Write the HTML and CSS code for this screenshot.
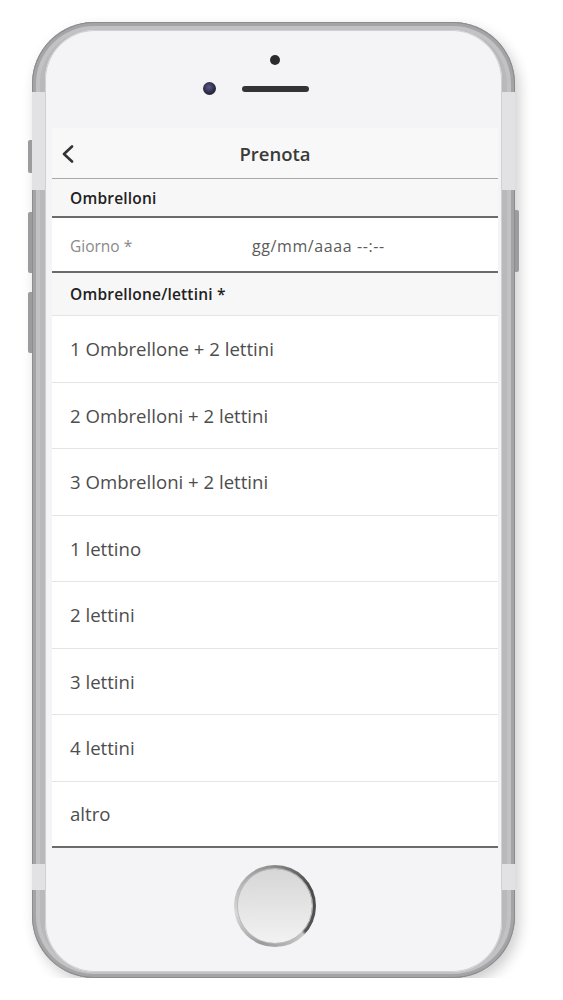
FILE: index.html
```html
<!DOCTYPE html>
<html>
<head>
    <meta charset="UTF-8">
    <title>Prenota</title>
    <link rel="stylesheet" href="styles.css">
</head>
<body>

    <div class="page">
        <div class="phone">
            <span class="side-btn left b1"></span>
            <span class="side-btn left b2"></span>
            <span class="side-btn left b3"></span>
            <span class="side-btn right b4"></span>
            <span class="band left top"></span>
            <span class="band right top"></span>
            <span class="band left bottom"></span>
            <span class="band right bottom"></span>

            <div class="bezel">
                <div class="top">
                    <div class="sensor"></div>
                    <div class="camera-row">
                        <div class="camera"></div>
                        <div class="speaker"></div>
                        <div class="spacer"></div>
                    </div>
                </div>

                <div class="screen">
                    <div class="nav">
                        <div class="back">
                            <svg width="14" height="18" viewBox="0 0 14 18">
                                <polyline points="11,1.5 3,9 11,16.5" fill="none" stroke="#333" stroke-width="2.6" stroke-linecap="round" stroke-linejoin="round"/>
                            </svg>
                        </div>
                        <div class="title">Prenota</div>
                        <div></div>
                    </div>

                    <div class="section first">Ombrelloni</div>
                    <div class="field">
                        <span class="label">Giorno *</span>
                        <span class="value">gg/mm/aaaa --:--</span>
                    </div>

                    <div class="section second">Ombrellone/lettini *</div>
                    <ul class="options">
                        <li>1 Ombrellone + 2 lettini</li>
                        <li>2 Ombrelloni + 2 lettini</li>
                        <li>3 Ombrelloni + 2 lettini</li>
                        <li>1 lettino</li>
                        <li>2 lettini</li>
                        <li>3 lettini</li>
                        <li>4 lettini</li>
                        <li>altro</li>
                    </ul>
                </div>

                <div class="bottom">
                    <div class="home"><div class="home-face"></div></div>
                </div>
            </div>
        </div>
    </div>

</body>
</html>
```

FILE: styles.css
```css
body {
    margin: 0;
    background: #fff;
    font-family: "Open Sans", Arial, sans-serif;
}

.page {
    padding: 22px 0 0 32px;
}

.phone {
    position: relative;
    box-sizing: border-box;
    width: 483px;
    height: 956px;
    padding: 8px 13px 6px 13px;
    border-radius: 62px;
    background: #b9b9bb;
    box-shadow: inset 0 0 0 1px #8c8c8e, inset 0 0 0 4px #a4a4a6, inset 0 0 0 8px #c2c2c4,
        4px 6px 14px rgba(0, 0, 0, 0.2);
}

.side-btn {
    position: absolute;
    width: 4px;
    background: #9c9c9e;
    border-radius: 2px 0 0 2px;
}

.side-btn.left { left: -4px; }
.side-btn.right { right: -4px; border-radius: 0 2px 2px 0; }
.b1 { top: 118px; height: 33px; }
.b2 { top: 190px; height: 61px; }
.b3 { top: 270px; height: 61px; }
.b4 { top: 188px; height: 62px; }

.band {
    position: absolute;
    width: 13px;
    height: 9px;
    background: #e2e2e4;
}

.band.left { left: 0; }
.band.right { right: 0; }
.band.top { top: 70px; }
.band.bottom { top: 842px; }

.bezel {
    display: flex;
    flex-direction: column;
    height: 100%;
    padding: 0 4px 0 7px;
    border-radius: 50px;
    background: #f4f4f6;
    box-shadow: inset 0 0 0 1px #d0d0d2;
    overflow: hidden;
}

.top {
    display: flex;
    flex-direction: column;
    align-items: center;
    height: 98px;
}

.sensor {
    width: 10px;
    height: 10px;
    margin: 25px 0 0 0;
    border-radius: 50%;
    background: #2b2b2d;
}

.camera-row {
    display: flex;
    align-items: center;
    gap: 26px;
    margin-top: 17px;
}

.camera {
    width: 13px;
    height: 13px;
    border-radius: 50%;
    background: radial-gradient(circle at 45% 40%, #5a5a8a 0, #2a2a44 55%, #1d1d24 100%);
}

.speaker {
    width: 67px;
    height: 6px;
    border-radius: 3px;
    background: #333335;
}

.spacer {
    width: 13px;
}

.screen {
    display: flex;
    flex-direction: column;
    background: #fff;
}

.nav {
    display: grid;
    grid-template-columns: 40px 1fr 40px;
    align-items: center;
    height: 50px;
    background: #f8f8f8;
    border-bottom: 1px solid #a9a9a9;
}

.back {
    display: flex;
    padding-left: 9px;
    padding-top: 2px;
}

.title {
    text-align: center;
    font-size: 18.5px;
    font-weight: 600;
    color: #3a3a3a;
}

.section {
    display: flex;
    align-items: center;
    padding-left: 18px;
    background: #f7f7f7;
    font-size: 15.5px;
    font-weight: 600;
    letter-spacing: 0.2px;
    color: #222;
}

.section.first {
    height: 37px;
    border-bottom: 2px solid #6b6b6b;
}

.section.second {
    height: 42px;
    border-bottom: 1px solid #e6e6e6;
}

.field {
    display: flex;
    align-items: center;
    box-sizing: border-box;
    height: 55px;
    padding-left: 18px;
    padding-top: 2px;
    border-bottom: 2px solid #6b6b6b;
    font-size: 15.5px;
}

.label {
    width: 182px;
    color: #8a8a8a;
}

.value {
    font-size: 16px;
    letter-spacing: 0.6px;
    color: #5c5c5c;
}

.options {
    margin: 0;
    padding: 0;
    list-style: none;
}

.options li {
    display: flex;
    align-items: center;
    box-sizing: border-box;
    height: 66.5px;
    padding-left: 18px;
    border-bottom: 1px solid #e4e4e4;
    font-size: 18.6px;
    color: #4d4d4d;
}

.options li:last-child {
    border-bottom: 2px solid #6b6b6b;
}

.bottom {
    flex: 1;
    display: flex;
    justify-content: center;
    padding-top: 17px;
}

.home {
    box-sizing: border-box;
    width: 82px;
    height: 82px;
    padding: 4px;
    border-radius: 50%;
    background: conic-gradient(#8a8a8a 0deg, #4a4a4a 60deg, #555 130deg, #c8c8c8 135deg, #9a9a9a 200deg, #d8d8d8 260deg, #a0a0a0 330deg, #8a8a8a 360deg);
}

.home-face {
    height: 100%;
    border-radius: 50%;
    background: linear-gradient(#d6d6d6, #f2f2f2);
    box-shadow: 0 0 0 1px #bcbcbc;
}
```
